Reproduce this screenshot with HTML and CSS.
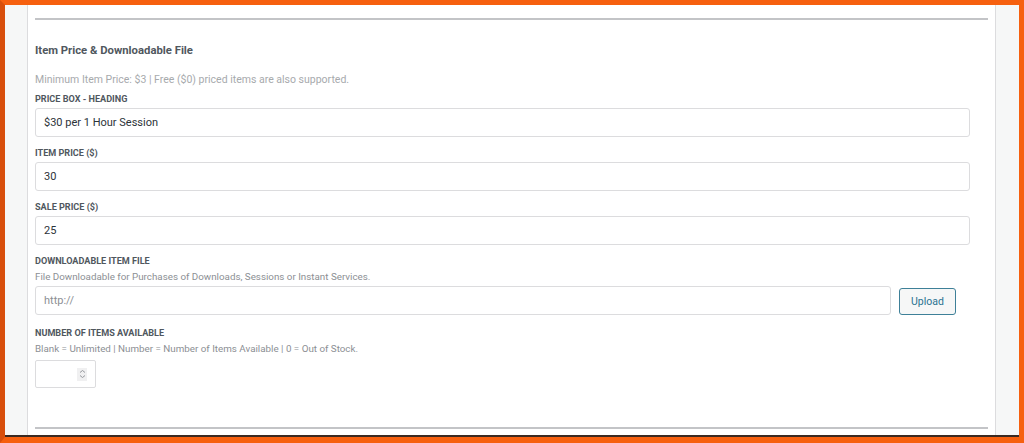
FILE: index.html
```html
<!DOCTYPE html>
<html lang="en">
<head>
<meta charset="utf-8">
<title>Item Price &amp; Downloadable File</title>
<link rel="stylesheet" href="styles.css">
</head>
<body>
<div class="frame">
  <div class="layout">
    <aside class="side side-left"></aside>
    <main class="panel">
      <hr class="rule">
      <h2 class="heading">Item Price &amp; Downloadable File</h2>
      <p class="note note-light">Minimum Item Price: $3 | Free ($0) priced items are also supported.</p>

      <div class="field field-first">
        <label class="label">PRICE BOX - HEADING</label>
        <div class="input">$30 per 1 Hour Session</div>
      </div>

      <div class="field">
        <label class="label">ITEM PRICE ($)</label>
        <div class="input">30</div>
      </div>

      <div class="field">
        <label class="label">SALE PRICE ($)</label>
        <div class="input">25</div>
      </div>

      <div class="field">
        <label class="label">DOWNLOADABLE ITEM FILE</label>
        <p class="note">File Downloadable for Purchases of Downloads, Sessions or Instant Services.</p>
        <div class="file-row">
          <div class="input input-file placeholder">http://</div>
          <button class="btn">Upload</button>
        </div>
      </div>

      <div class="field field-num">
        <label class="label">NUMBER OF ITEMS AVAILABLE</label>
        <p class="note note-num">Blank = Unlimited | Number = Number of Items Available | 0 = Out of Stock.</p>
        <div class="num">
          <span class="spin">
            <svg width="7" height="10" viewBox="0 0 7 10"><path d="M1 3.5 L3.5 1.5 L6 3.5" fill="none" stroke="#8c8f94" stroke-width="0.9"/><path d="M1 6.5 L3.5 8.5 L6 6.5" fill="none" stroke="#8c8f94" stroke-width="0.9"/></svg>
          </span>
        </div>
      </div>

      <div class="spacer"></div>
      <hr class="rule rule-bottom">
    </main>
    <aside class="side side-right"></aside>
  </div>
</div>
</body>
</html>
```

FILE: styles.css
```css
* { box-sizing: border-box; }
html, body { margin: 0; padding: 0; }
body {
  width: 1024px;
  height: 443px;
  overflow: hidden;
  font-family: Roboto, "Liberation Sans", sans-serif;
  background: #f25c0f;
}
.frame {
  height: 443px;
  border: 5px solid #f6600f;
  border-left-color: #d84f0c;
  border-bottom-width: 6px;
  background: #f6f7f7;
}
.layout {
  display: flex;
  height: 100%;
  border-bottom: 2px solid #3a2a22;
}
.side {
  width: 22px;
  background: #f6f7f7;
  flex: none;
}
.side-right { width: 23px; }
.panel {
  flex: 1;
  background: #fff;
  border-left: 1px solid #dcdcde;
  border-right: 1px solid #dcdcde;
  padding: 13px 7px 0 7px;
  display: flex;
  flex-direction: column;
}
.rule {
  margin: 0;
  border: 0;
  height: 2px;
  background: #c3c4c7;
  flex: none;
}
.heading {
  margin: 24px 0 0 0;
  font-size: 11.3px;
  line-height: 14px;
  font-weight: 700;
  color: #50575e;
}
.note {
  margin: 2px 0 2px 0;
  font-size: 9.8px;
  line-height: 14px;
  color: #8c8f94;
}
.note-light {
  margin: 15px 0 0 0;
  font-size: 10.5px;
  color: #a7aaad;
}
.note-num { margin: 3px 0 4px 0; }
.field {
  width: 935px;
  margin-bottom: 10px;
}
.field-first { margin-top: 6px; }
.field-num { margin-top: 2px; }
.label {
  display: block;
  font-size: 9.1px;
  line-height: 12px;
  font-weight: 700;
  color: #50575e;
  margin-bottom: 3px;
}
.input {
  height: 29px;
  border: 1px solid #dcdcde;
  border-radius: 3px;
  padding: 0 8px;
  font-size: 11px;
  line-height: 27px;
  color: #2c3338;
  background: #fff;
}
.file-row {
  display: flex;
  align-items: flex-start;
  gap: 8px;
  width: 921px;
}
.input-file { flex: 1; }
.placeholder { color: #8c8f94; }
.btn {
  width: 57px;
  height: 27px;
  margin-top: 2px;
  border: 1px solid #3e8098;
  border-radius: 3px;
  background: #f6f7f7;
  color: #2a7391;
  font-family: Roboto, "Liberation Sans", sans-serif;
  font-size: 10.5px;
  padding: 0;
}
.num {
  width: 61px;
  height: 28px;
  border: 1px solid #dcdcde;
  border-radius: 2px;
  display: flex;
  align-items: center;
  justify-content: flex-end;
  padding-right: 8px;
}
.spin {
  width: 10px;
  height: 13px;
  background: #f0f0f1;
  display: flex;
  align-items: center;
  justify-content: center;
}
.spacer { flex: 1; }
.rule-bottom { margin-bottom: 6px; }
```
